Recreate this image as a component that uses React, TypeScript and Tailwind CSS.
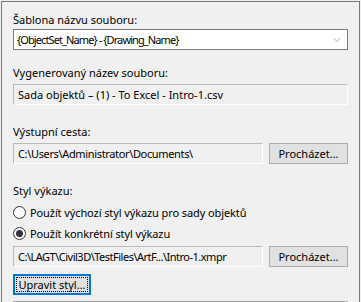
import { ChevronDown } from 'lucide-react';

const ReadOnlyBox = ({ text, className = '', textClass = '' }: { text: string; className?: string; textClass?: string }) => (
  <div
    className={`h-[21px] flex items-center px-[4px] bg-[#f0f0f0] border-t border-l border-[#b9b9b9] border-r-white border-b-white border-r border-b whitespace-nowrap overflow-hidden ${className}`}
  >
    <span className={textClass}>{text}</span>
  </div>
);

const BrowseButton = () => (
  <button className="w-[79px] h-[21px] shrink-0 bg-[#e1e1e1] border border-[#adadad] flex items-center justify-center whitespace-nowrap">
    Procházet...
  </button>
);

const Radio = ({ checked, label }: { checked?: boolean; label: string }) => (
  <div className="flex items-center h-[21px]">
    <span className="w-[13px] h-[13px] rounded-full border border-[#333333] bg-white flex items-center justify-center">
      {checked && <span className="w-[7px] h-[7px] rounded-full bg-[#333333]" />}
    </span>
    <span className="ml-[4px] tracking-[-0.1px]">{label}</span>
  </div>
);

const App = () => {
  return (
    <div className="w-[361px] h-[302px] bg-[#f0f0f0] overflow-hidden text-[11px] leading-[16px] text-black" style={{ fontFamily: '"Noto Sans", sans-serif' }}>
      <div className="ml-[1px] mt-[1px] w-[359px] h-[310px] border-l border-t border-r border-[#7a7a7a] pl-[11px] pr-[11px] pt-[10px]">

        {/* šablona */}
        <div className="h-[16px]">Šablona názvu souboru:</div>
        <div className="mt-[1px] h-[21px] bg-white border border-[#7a7a7a] flex items-center pl-[3px] pr-[4px]">
          <span className="flex-1 whitespace-nowrap tracking-[-0.9px]">{'{ObjectSet_Name} - {Drawing_Name}'}</span>
          <ChevronDown size={12} strokeWidth={1} className="text-[#606060]" />
        </div>

        {/* vygenerovaný název */}
        <div className="mt-[15px] h-[16px]">Vygenerovaný název souboru:</div>
        <ReadOnlyBox className="mt-[3px]" text="Sada objektů – (1) - To Excel - Intro-1.csv" />

        {/* výstupní cesta */}
        <div className="mt-[19px] h-[16px]">Výstupní cesta:</div>
        <div className="mt-[3px] flex gap-[6px]">
          <ReadOnlyBox className="flex-1" textClass="tracking-[-0.35px]" text="C:\Users\Administrator\Documents\" />
          <BrowseButton />
        </div>

        {/* styl výkazu */}
        <div className="mt-[19px] h-[16px]">Styl výkazu:</div>
        <div className="mt-[3px]">
          <Radio label="Použít výchozí styl výkazu pro sady objektů" />
          <Radio checked label="Použít konkrétní styl výkazu" />
        </div>
        <div className="mt-[2px] flex gap-[6px]">
          <ReadOnlyBox className="flex-1" textClass="tracking-[-0.5px]" text="C:\LAGT\Civil3D\TestFiles\ArtF...\Intro-1.xmpr" />
          <BrowseButton />
        </div>

        <button className="mt-[7px] w-[78px] h-[21px] bg-[#e1e1e1] border-2 border-[#0078d7] p-[1px] block whitespace-nowrap">
          <span className="w-full h-full border border-dotted border-black flex items-center justify-center">
            Upravit styl...
          </span>
        </button>

        <div className="mt-[6px] h-[1px] bg-[#a0a0a0]" />
      </div>
    </div>
  );
};

export default App;
